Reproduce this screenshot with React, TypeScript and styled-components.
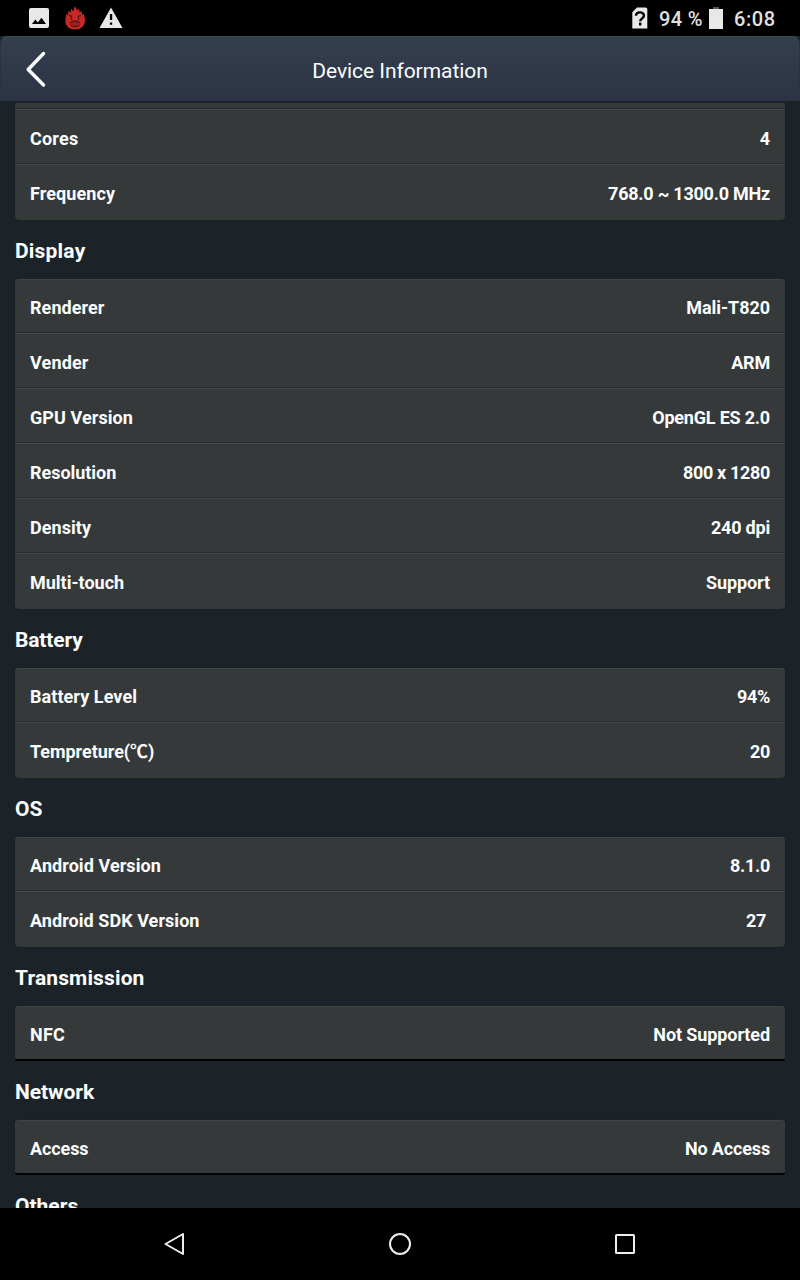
import React from "react";
import styled, { createGlobalStyle } from "styled-components";

const GlobalStyle = createGlobalStyle`
  * { box-sizing: border-box; }
  body { margin: 0; background: #000; font-family: Roboto, "Noto Sans CJK SC", sans-serif; }
`;

const Screen = styled.div`
  width: 800px;
  height: 1280px;
  display: flex;
  flex-direction: column;
  overflow: hidden;
  background: #1c2328;
  color: #fbfdfd;
`;

const StatusBar = styled.div`
  flex: none;
  height: 36px;
  padding: 0 24px 0 27px;
  display: flex;
  align-items: center;
  justify-content: space-between;
  background: #000;
`;

const StatusGroup = styled.div`
  display: flex;
  align-items: center;
`;

const NotificationIcons = styled(StatusGroup)`
  gap: 12px;
  svg { display: block; }
`;

const StatusText = styled.span<{ $width: number; $tracking?: number }>`
  width: ${(p) => p.$width}px;
  font-size: 20px;
  font-weight: 500;
  letter-spacing: ${(p) => p.$tracking ?? 0}px;
  line-height: 36px;
  padding-top: 1px;
  color: #e0e0e0;
  white-space: nowrap;
`;

const Header = styled.header`
  flex: none;
  height: 65px;
  display: grid;
  grid-template-columns: 72px 1fr 72px;
  align-items: center;
  border: 1px solid #293440;
  border-top-color: #3e474f;
  border-bottom: 0;
  border-radius: 7px 7px 0 0;
  background: linear-gradient(#343f4e, #2c3345);
`;

const BackButton = styled.button`
  border: 0;
  padding: 0 0 0 24px;
  background: none;
  height: 36px;
  svg { display: block; }
`;

const Title = styled.h1`
  margin: 0;
  padding-top: 4px;
  text-align: center;
  font-size: 21px;
  line-height: 28px;
  font-weight: 400;
  letter-spacing: -0.06px;
`;

const Content = styled.main`
  flex: 1;
  min-height: 0;
  overflow: hidden;
  border-top: 2px solid #1a2226;
  padding: 0 15px;
`;

const List = styled.div`
  margin-top: -48px;
`;

const SectionTitle = styled.h2<{ $tracking?: number }>`
  margin: 0;
  height: 59px;
  padding-top: 3px;
  font-size: 21px;
  line-height: 56px;
  font-weight: 700;
  letter-spacing: ${(p) => p.$tracking ?? 0}px;
`;

const Card = styled.div<{ $single: boolean }>`
  border-radius: 4px;
  overflow: hidden;
  background: #36393a;
  box-shadow: inset 0 1px #414546, 0 0 1px #111719;
  ${(p) => p.$single && "border-bottom: 2px solid #000; border-bottom-left-radius: 3px; border-bottom-right-radius: 3px;"}
`;

const Row = styled.div<{ $single: boolean }>`
  height: ${(p) => (p.$single ? 53 : 55)}px;
  padding: 3px 15px 0;
  display: flex;
  justify-content: space-between;
  font-size: 18px;
  line-height: 52px;
  font-weight: 700;
  &:not(:last-child) {
    box-shadow: inset 0 -1px #444848, inset 0 -2px #2a2e2f;
  }
`;

const Label = styled.span<{ $tracking?: number }>`
  letter-spacing: ${(p) => p.$tracking ?? 0.07}px;
`;

const Value = styled.span<{ $inset?: number; $tracking?: number }>`
  padding-right: ${(p) => p.$inset ?? 0}px;
  letter-spacing: ${(p) => p.$tracking ?? -0.1}px;
`;

const NavBar = styled.nav`
  flex: none;
  height: 72px;
  padding: 0 62px;
  display: grid;
  grid-template-columns: repeat(3, 1fr);
  align-items: center;
  justify-items: center;
  background: #000;
  svg { display: block; }
`;

type Item = { label: string; value: string; inset?: number; labelTracking?: number; tracking?: number };
type Section = { title?: string; tracking?: number; items: Item[] };

const sections: Section[] = [
  {
    items: [
      { label: "", value: "" },
      { label: "Cores", value: "4", labelTracking: 0.2 },
      { label: "Frequency", value: "768.0 ~ 1300.0 MHz", labelTracking: 0.1, tracking: -0.23 },
    ],
  },
  {
    title: "Display",
    tracking: 0.2,
    items: [
      { label: "Renderer", value: "Mali-T820", tracking: -0.05 },
      { label: "Vender", value: "ARM", labelTracking: 0.15, tracking: -0.2 },
      { label: "GPU Version", value: "OpenGL ES 2.0", tracking: -0.2 },
      { label: "Resolution", value: "800 x 1280", labelTracking: -0.04, tracking: -0.33 },
      { label: "Density", value: "240 dpi", tracking: -0.2 },
      { label: "Multi-touch", value: "Support", labelTracking: 0 },
    ],
  },
  {
    title: "Battery",
    tracking: -0.15,
    items: [
      { label: "Battery Level", value: "94%", tracking: -0.35 },
      { label: "Tempreture(℃)", value: "20", labelTracking: -0.04, tracking: -0.35 },
    ],
  },
  {
    title: "OS",
    items: [
      { label: "Android Version", value: "8.1.0", tracking: -0.3 },
      { label: "Android SDK Version", value: "27", inset: 4, labelTracking: 0.05, tracking: -0.35 },
    ],
  },
  { title: "Transmission", tracking: 0.13, items: [{ label: "NFC", value: "Not Supported", labelTracking: 0.2 }] },
  { title: "Network", tracking: -0.05, items: [{ label: "Access", value: "No Access", labelTracking: -0.1, tracking: -0.15 }] },
  { title: "Others", items: [] },
];

const PictureIcon = () => (
  <svg width="24" height="24" viewBox="0 0 24 24">
    <rect x="2" y="2" width="20" height="20" rx="2" fill="#e8e8e8" />
    <path d="M5 18l3.3-4.4 2.5 3 3.7-4.8L19 18z" fill="#000" />
  </svg>
);

const FlameIcon = () => (
  <svg width="24" height="24" viewBox="0 0 24 24">
    <path d="M2.500 13L3 8l2 1.500.5-5L7.500 7 8 2.500l2.200 2.700L12 0l2.200 4.500L16 2.500l.6 4L18.800 5l.2 4 2-1 .8 5C22.800 19 18.500 23.500 12 23.500S1.500 19 2.500 13z" fill="#c82928" />
    <path d="M6 9.500l3.300 1M18 9.500l-3.300 1M8.500 10v4M15.500 10v4" stroke="#641313" strokeWidth="1.400" fill="none" />
    <ellipse cx="12" cy="17.800" rx="5.800" ry="3.900" fill="#9c201f" />
    <path d="M7 17c2-2.500 8-2.500 10 0M8 19.500c2 1.500 6 1.500 8 0M10 16v1M14 16v1" stroke="#511515" fill="none" />
  </svg>
);

const WarningIcon = () => (
  <svg width="24" height="24" viewBox="0 0 24 24">
    <path d="M12 1.500L23.500 22H.5z" fill="#e8e8e8" />
    <path d="M10.900 8h2.300v6h-2.300zM10.900 16.500h2.300v2.300h-2.300z" fill="#000" />
  </svg>
);

const SimIcon = () => (
  <svg width="16" height="22" viewBox="0 0 16 22">
    <path d="M5 .5h8.500q1.800 0 1.800 1.500v19.500H.3V5.300z" fill="#e8e8e8" />
    <path d="M4 8.800c0-4.500 8-4.500 8-.2 0 2.900-3.800 2.700-3.800 5.600M8.200 15.600v2.800" stroke="#000" strokeWidth="2.400" fill="none" />
  </svg>
);

const BatteryIcon = () => (
  <svg width="14" height="22" viewBox="0 0 14 22">
    <path d="M4 0h6v3H4z" fill="#555" />
    <path d="M0 2h14v20H0z" fill="#e8e8e8" />
  </svg>
);

const BackIcon = () => (
  <svg width="24" height="36" viewBox="0 0 24 36">
    <path d="M18.500 2.500L3.200 18.500l15.300 15.500" fill="none" stroke="#fff" strokeWidth="3.400" strokeLinecap="round" strokeLinejoin="round" />
  </svg>
);

const IconSlot = styled.span<{ $width: number }>`
  width: ${(p) => p.$width}px;
  svg { display: block; }
`;

export default function App() {
  return (
    <Screen>
      <GlobalStyle />
      <StatusBar>
        <NotificationIcons>
          <PictureIcon />
          <FlameIcon />
          <WarningIcon />
        </NotificationIcons>
        <StatusGroup>
          <IconSlot $width={27}><SimIcon /></IconSlot>
          <StatusText $width={50} $tracking={0.35}>94 %</StatusText>
          <IconSlot $width={25}><BatteryIcon /></IconSlot>
          <StatusText $width={42} $tracking={0.55}>6:08</StatusText>
        </StatusGroup>
      </StatusBar>
      <Header>
        <BackButton aria-label="Back"><BackIcon /></BackButton>
        <Title>Device Information</Title>
      </Header>
      <Content>
        <List>
          {sections.map((section, i) => {
            const single = section.items.length === 1;
            return (
              <section key={i}>
                {section.title && <SectionTitle $tracking={section.tracking}>{section.title}</SectionTitle>}
                {section.items.length > 0 && (
                  <Card $single={single}>
                    {section.items.map((item, j) => (
                      <Row key={j} $single={single}>
                        <Label $tracking={item.labelTracking}>{item.label}</Label>
                        <Value $inset={item.inset} $tracking={item.tracking}>{item.value}</Value>
                      </Row>
                    ))}
                  </Card>
                )}
              </section>
            );
          })}
        </List>
      </Content>
      <NavBar>
        <svg width="24" height="24" viewBox="0 0 24 24">
          <path d="M20 2v20L2.500 12z" fill="none" stroke="#eee" strokeWidth="2" strokeLinejoin="round" />
        </svg>
        <svg width="24" height="24" viewBox="0 0 24 24">
          <circle cx="12" cy="12" r="10" fill="none" stroke="#eee" strokeWidth="2" />
        </svg>
        <svg width="24" height="24" viewBox="0 0 24 24">
          <rect x="3" y="3" width="18" height="18" rx=".5" fill="none" stroke="#eee" strokeWidth="2" />
        </svg>
      </NavBar>
    </Screen>
  );
}
